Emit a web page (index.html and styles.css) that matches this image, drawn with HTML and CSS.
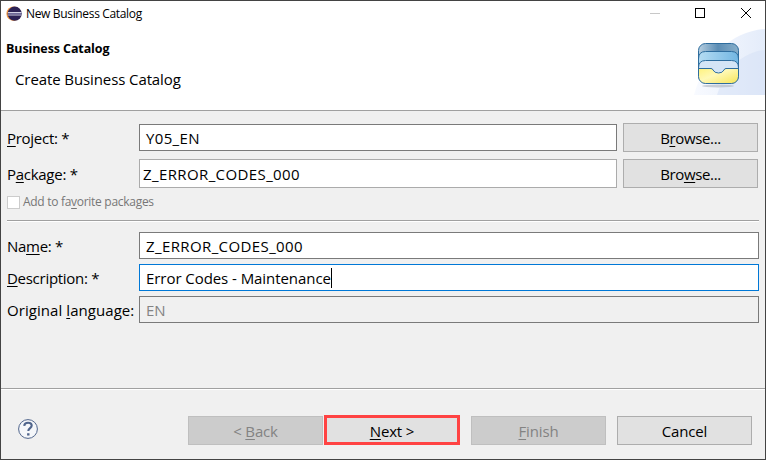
FILE: index.html
```html
<!DOCTYPE html>
<html lang="en">
<head>
<meta charset="utf-8">
<title>New Business Catalog</title>
<link rel="stylesheet" href="styles.css">
</head>
<body>
<main class="dialog">
  <header class="header">
    <div class="titlebar">
      <svg class="app-icon" width="16" height="16" viewBox="0 0 16 16"><circle cx="7.700" cy="7.700" r="7.300" fill="#f49a45"/><circle cx="8.700" cy="7.700" r="7.100" fill="#2c2255"/><path d="M2 6.500h13.500M2 9h13.500" stroke="#d2d0e4" stroke-width="1.200"/><path d="M2 7.750h13.500" stroke="#7d78a5" stroke-width="1.200"/></svg>
      <span class="window-title">New Business Catalog</span>
      <svg class="controls" width="103" height="12" viewBox="0 0 103 12" fill="none" shape-rendering="crispEdges"><path d="M0 5.500h10" stroke="#c8c8c8"/><path d="M45.500 .5h9v9h-9z" stroke="#000"/><path d="M91 0l10 10M101 0L91 10" stroke="#000" shape-rendering="auto"/></svg>
    </div>
    <div class="banner">
      <div class="headings">
        <h1 class="heading">Business Catalog</h1>
        <p class="subtitle">Create Business Catalog</p>
      </div>
      <svg class="art" width="74" height="70" viewBox="0 0 74 70">
        <defs>
          <linearGradient id="sky" x1="0" y1="0" x2="1" y2="0"><stop offset="0" stop-color="#f8faff"/><stop offset="1" stop-color="#e4ecfa"/></linearGradient>
          <linearGradient id="top" x1="0" y1="0" x2="1" y2="0"><stop offset="0" stop-color="#bed4e4"/><stop offset=".5" stop-color="#5b8db4"/><stop offset="1" stop-color="#88afcb"/></linearGradient>
          <linearGradient id="mid" x1="0" y1="0" x2="1" y2="0"><stop offset="0" stop-color="#b5dcf3"/><stop offset="1" stop-color="#72b6e2"/></linearGradient>
          <linearGradient id="tray" x1="0" y1="0" x2="1" y2="1"><stop offset="0" stop-color="#fff27a"/><stop offset=".4" stop-color="#fff9b7"/><stop offset="1" stop-color="#f5e24b"/></linearGradient>
          <clipPath id="box"><rect x="7.500" y="16.500" width="40" height="40" rx="7"/></clipPath>
        </defs>
        <path d="M3 68C14 29 40 5 74 2v66z" fill="url(#sky)"/>
        <path d="M26 68C35 40 53 25 74 23v45z" fill="#d3e0f5" opacity=".5"/>
        <ellipse cx="27" cy="59" rx="16" ry="1.500" fill="#aab2bd" opacity=".6"/>
        <g clip-path="url(#box)" stroke="#2e6d9e">
          <path d="M6 15h42v42H6z" fill="url(#top)"/>
          <path d="M7.500 32q0-7.500 7-7.500h26q7 0 7 7.500v10h-40z" fill="url(#mid)"/>
          <path d="M7.500 41q0-7.500 7-7.500h26q7 0 7 7.500v12h-40z" fill="#d4e5f6"/>
          <path d="M6 41.500h14q1.500 0 2 1.500 1.500 3 5.500 3t5.500-3q.5-1.500 2-1.500h13v17H6z" fill="url(#tray)"/>
        </g>
        <rect x="7.500" y="16.500" width="40" height="40" rx="7" fill="none" stroke="#2e6d9e"/>
      </svg>
    </div>
  </header>
  <section class="form">
    <div class="row project"><label class="label"><span><u>P</u>roject: *</span></label><div class="field"><span class="project-name">Y05_EN</span></div><button class="button">B<u>r</u>owse...</button></div>
    <div class="row package"><label class="label"><span>P<u>a</u>ckage: *</span></label><div class="field light"><span class="code">Z_ERROR_CODES_000</span></div><button class="button">Bro<u>w</u>se...</button></div>
    <div class="favorite"><i class="checkbox"></i><span>Add to fa<u>v</u>orite packages</span></div>
    <hr class="rule">
    <div class="row"><label class="label"><span>Na<u>m</u>e: *</span></label><div class="field"><span class="code">Z_ERROR_CODES_000</span></div></div>
    <div class="row"><label class="label"><span><u>D</u>escription: *</span></label><div class="field focus"><span class="description">Error Codes - Maintenance</span><i class="caret"></i></div></div>
    <div class="row"><label class="label"><span class="language">Original <u>l</u>anguage:</span></label><div class="field disabled"><span>EN</span></div></div>
  </section>
  <footer class="footer">
    <svg class="help" width="20" height="20" viewBox="0 0 20 20" fill="none" stroke="#50658c"><circle cx="10" cy="10" r="9.400" fill="#f5f7fa" stroke-width="1"/><path d="M6.200 6.900c.2-2.200 1.700-3.100 3.900-3.100 2.300 0 3.600 1.100 3.600 2.800 0 2.500-3.400 2.600-3.400 5.500" stroke-width="2.100"/><path d="M9.100 15.400h2.400" stroke-width="2.300"/></svg>
    <button class="button off">&lt; <u>B</u>ack</button>
    <button class="button next"><u>N</u>ext &gt;</button>
    <button class="button off finish"><u>F</u>inish</button>
    <button class="button cancel">Cancel</button>
  </footer>
</main>
</body>
</html>
```
FILE: styles.css
```css
* { box-sizing: border-box; }
body { margin: 0; font: 15px/20px "Open Sans", "Noto Sans", sans-serif; letter-spacing: -.15px; color: #000; }
.dialog { width: 766px; height: 460px; border: 1px solid #434343; background: #f0f0f0; display: flex; flex-direction: column; }
.header { height: 110px; background: #fff; border-bottom: 1px solid #a0a0a0; flex: none; }
.titlebar { height: 26px; display: flex; align-items: center; padding: 0 12px 0 5px; }
.app-icon { flex: none; }
.window-title { font-size: 12px; letter-spacing: -.34px; margin-left: 4px; white-space: nowrap; }
.controls { margin-left: auto; }
.banner { display: flex; justify-content: space-between; }
.headings { padding: 12px 0 0 5px; }
.heading { margin: 0; font-size: 12.5px; line-height: 20px; letter-spacing: -.1px; }
.subtitle { margin: 10px 0 0 9px; letter-spacing: -.1px; }
.form { display: flex; flex-direction: column; padding: 12px 6px 0; height: 277px; flex: none; }
.row { display: flex; align-items: center; height: 27px; margin-bottom: 5px; flex: none; }
.project { height: 29px; margin-bottom: 7px; }
.package { height: 29px; margin-bottom: 4px; }
.label { width: 132px; flex: none; white-space: nowrap; letter-spacing: -.28px; }
.language { letter-spacing: .06px; }
.field { flex: 1; height: 27px; border: 1px solid #7a7a7a; background: #fff; display: flex; align-items: center; padding: 0 0 0 6px; white-space: nowrap; }
.light { height: 29px; border-color: #ababab; padding-left: 3px; }
.code { letter-spacing: .39px; }
.project-name { letter-spacing: .35px; }
.description { letter-spacing: -.06px; }
.focus { border-color: #0078d7; }
.disabled { background: #f0f0f0; color: #838383; }
.caret { width: 1px; height: 20px; background: #000; }
.button { width: 135px; height: 29px; padding: 0; border: 1px solid #adadad; background: #e1e1e1; color: #000; font: inherit; letter-spacing: inherit; }
.row .button { margin: 0 1px 0 6px; letter-spacing: -.35px; }
.favorite { display: flex; align-items: center; height: 20px; font-size: 12px; color: #777; letter-spacing: -.29px; }
.checkbox { width: 13px; height: 13px; border: 1px solid #ccc; background: #fff; margin-right: 3px; }
.rule { width: 100%; height: 2px; border: 0; border-top: 1px solid #a0a0a0; background: #fff; margin: 8px 0 10px; flex: none; }
u { text-underline-offset: 2px; text-decoration-thickness: 1px; text-decoration-skip-ink: none; }
.footer { flex: 1; display: flex; align-items: flex-start; border-top: 1px solid #a0a0a0; box-shadow: inset 0 1px #fff; padding: 27px 13px 0 17px; }
.help { margin: 3px 150px 0 0; flex: none; }
.off { background: #ccc; border-color: #bfbfbf; color: #838383; }
.next { width: 136px; height: 30px; padding-top: 1px; border: 3px solid #ff4343; margin: -1px 11px 0 1px; }
.cancel { margin-left: 11px; }
```
